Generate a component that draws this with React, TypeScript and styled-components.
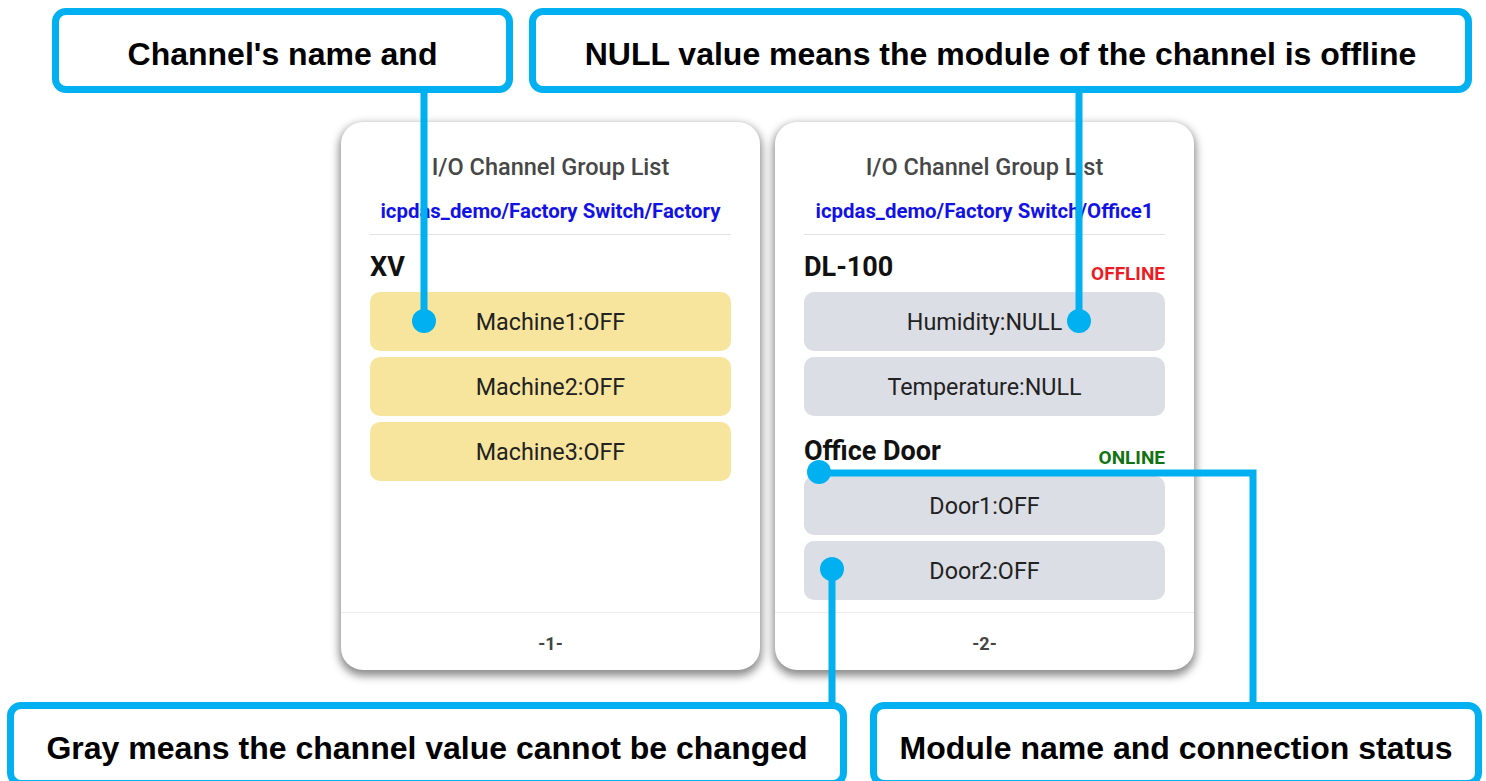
import styled, { createGlobalStyle } from 'styled-components'

const CYAN = '#00b0f0'

const GlobalStyle = createGlobalStyle`
  html, body {
    margin: 0;
    padding: 0;
    background: #ffffff;
    overflow: hidden;
  }
  * {
    box-sizing: border-box;
  }
`

const Page = styled.div`
  position: relative;
  width: 1486px;
  height: 781px;
  overflow: hidden;
  display: flex;
  flex-direction: column;
`

const CalloutRow = styled.div<{ top: number; left: number; gap: number }>`
  display: flex;
  gap: ${({ gap }) => gap}px;
  margin-top: ${({ top }) => top}px;
  padding-left: ${({ left }) => left}px;
`

const Callout = styled.div<{ w: number }>`
  width: ${({ w }) => w}px;
  height: 85px;
  flex-shrink: 0;
  border: 7px solid ${CYAN};
  border-radius: 14px;
  background: #ffffff;
  display: flex;
  align-items: center;
  justify-content: center;
  padding-top: 8px;
  font-family: 'Liberation Sans', Arial, sans-serif;
  font-weight: 700;
  font-size: 32px;
  color: #000000;
  white-space: nowrap;
`

const CardsRow = styled.div`
  display: flex;
  gap: 15px;
  margin-top: 29px;
  padding-left: 341px;
`

const Card = styled.div`
  width: 419px;
  height: 548px;
  background: #ffffff;
  border-radius: 22px;
  box-shadow: 0 4px 9px 2px rgba(0, 0, 0, 0.45);
  display: flex;
  flex-direction: column;
  font-family: Roboto, 'Noto Sans', sans-serif;
`

const CardBody = styled.div`
  flex: 1;
  min-height: 0;
  overflow: hidden;
  padding: 31px 29px 0;
  display: flex;
  flex-direction: column;
`

const Title = styled.div`
  text-align: center;
  font-size: 23.5px;
  font-weight: 500;
  color: #474747;
  line-height: 28px;
`

const PathText = styled.div`
  text-align: center;
  font-size: 20.4px;
  font-weight: 700;
  color: #1212e6;
  line-height: 24px;
  margin-top: 18px;
`

const Divider = styled.div`
  height: 1px;
  background: #e2e2e2;
  margin-top: 11px;
  margin-bottom: 11px;
`

const Groups = styled.div`
  display: flex;
  flex-direction: column;
  gap: 14px;
`

const Group = styled.div`
  display: flex;
  flex-direction: column;
  gap: 6px;
`

const GroupHeader = styled.div`
  height: 42px;
  display: flex;
  align-items: flex-end;
  justify-content: space-between;
  padding-bottom: 5px;
  margin-bottom: -2px;
`

const ModuleName = styled.div`
  font-size: 27px;
  font-weight: 700;
  color: #111111;
  line-height: 32px;
`

const Status = styled.div<{ online: boolean }>`
  font-size: 19px;
  font-weight: 700;
  color: ${({ online }) => (online ? '#127312' : '#ec1c24')};
  line-height: 20px;
  margin-bottom: -1px;
`

const Channel = styled.div<{ tone: 'yellow' | 'gray' }>`
  height: 59px;
  flex-shrink: 0;
  border-radius: 10px;
  background: ${({ tone }) => (tone === 'yellow' ? '#f7e59d' : '#dcdee5')};
  display: flex;
  align-items: center;
  justify-content: center;
  font-size: 23.3px;
  color: #222222;
`

const Footer = styled.div`
  height: 58px;
  flex-shrink: 0;
  border-top: 1px solid #ececec;
  display: flex;
  align-items: center;
  justify-content: center;
  padding-top: 3px;
  font-size: 18px;
  font-weight: 700;
  color: #444444;
`

const Connectors = styled.svg`
  position: absolute;
  left: 0;
  top: 0;
  pointer-events: none;
`

type Module = {
  name: string
  status?: 'ONLINE' | 'OFFLINE'
  tone: 'yellow' | 'gray'
  channels: string[]
}

const pages: { path: string; modules: Module[] }[] = [
  {
    path: 'icpdas_demo/Factory Switch/Factory',
    modules: [
      { name: 'XV', tone: 'yellow', channels: ['Machine1:OFF', 'Machine2:OFF', 'Machine3:OFF'] },
    ],
  },
  {
    path: 'icpdas_demo/Factory Switch/Office1',
    modules: [
      { name: 'DL-100', status: 'OFFLINE', tone: 'gray', channels: ['Humidity:NULL', 'Temperature:NULL'] },
      { name: 'Office Door', status: 'ONLINE', tone: 'gray', channels: ['Door1:OFF', 'Door2:OFF'] },
    ],
  },
]

const App = () => {
  return (
    <>
      <GlobalStyle />
      <Page>
        <CalloutRow top={8} left={52} gap={16}>
          <Callout w={461}>Channel's name and</Callout>
          <Callout w={943}>NULL value means the module of the channel is offline</Callout>
        </CalloutRow>

        <CardsRow>
          {pages.map((page, i) => (
            <Card key={i}>
              <CardBody>
                <Title>I/O Channel Group List</Title>
                <PathText>{page.path}</PathText>
                <Divider />
                <Groups>
                  {page.modules.map(mod => (
                    <Group key={mod.name}>
                      <GroupHeader>
                        <ModuleName>{mod.name}</ModuleName>
                        {mod.status && <Status online={mod.status === 'ONLINE'}>{mod.status}</Status>}
                      </GroupHeader>
                      {mod.channels.map(ch => (
                        <Channel key={ch} tone={mod.tone}>{ch}</Channel>
                      ))}
                    </Group>
                  ))}
                </Groups>
              </CardBody>
              <Footer>-{i + 1}-</Footer>
            </Card>
          ))}
        </CardsRow>

        <CalloutRow top={32} left={7} gap={23}>
          <Callout w={840}>Gray means the channel value cannot be changed</Callout>
          <Callout w={612}>Module name and connection status</Callout>
        </CalloutRow>

        {/* leader lines from the callouts to the parts they describe */}
        <Connectors width="1486" height="781" viewBox="0 0 1486 781">
          <g stroke={CYAN} strokeWidth="7" fill="none">
            <line x1="424" y1="90" x2="424" y2="321" />
            <line x1="1079" y1="90" x2="1079" y2="321" />
            <polyline points="819,473 1253,473 1253,705" />
            <line x1="832" y1="569" x2="832" y2="705" />
          </g>
          <g fill={CYAN}>
            <circle cx="424" cy="321" r="12" />
            <circle cx="1079" cy="321" r="12" />
            <circle cx="819" cy="472" r="12" />
            <circle cx="832" cy="569" r="12" />
          </g>
        </Connectors>
      </Page>
    </>
  )
}

export default App
